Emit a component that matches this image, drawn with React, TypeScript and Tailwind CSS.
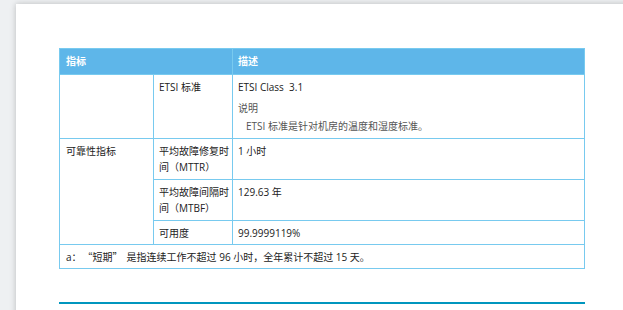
import React from "react";

const cell = "border border-[#78caef] px-[5px] pt-[4px] pb-[4px] align-top leading-[16px]";
const cellS = "border border-[#78caef] px-[5px] pt-[4px] pb-[3px] align-top leading-[16px]";
const cjk = { fontFamily: '"Noto Sans CJK SC", sans-serif' };

export default function App() {
  return (
    <div className="w-[623px] h-[310px] bg-[#eef0f2] overflow-hidden" style={{ fontFamily: '"Open Sans", "Noto Sans CJK SC", sans-serif' }}>
      <div className="ml-[16px] mt-[4px] h-[320px] bg-white shadow-[0_0_6px_rgba(0,0,0,0.22)] pl-[43px] pt-[44px] w-[640px]">
        <table lang="zh-CN" className="w-[526px] border-collapse text-[10px] text-[#222]">
          <colgroup>
            <col className="w-[94px]" />
            <col className="w-[79px]" />
            <col />
          </colgroup>
          <thead>
            <tr className="bg-[#5eb6e9] h-[26px]">
              <th colSpan={2} className="border border-[#78caef] px-[6px] text-left font-bold text-white text-[10px]">指标</th>
              <th className="border border-[#78caef] px-[5px] text-left font-bold text-white text-[10px]">描述</th>
            </tr>
          </thead>
          <tbody>
            <tr>
              <td className={cell}></td>
              <td className={cell + " pr-0"}>ETSI 标准</td>
              <td className={cell + " pb-[3px]"}>
                <div>ETSI Class&nbsp; 3.1</div>
                <div className="mt-[5px] text-[#555]">说明</div>
                <div className="mt-[2px] pl-[8px] text-[#555]">ETSI 标准是针对机房的温度和湿度标准。</div>
              </td>
            </tr>
            <tr>
              <td rowSpan={3} className={cell + " pl-[6px]"}>可靠性指标</td>
              <td className={cell + " pr-0"}>平均故障修复时间（MTTR）</td>
              <td className={cell}>1 小时</td>
            </tr>
            <tr>
              <td className={cell + " pr-0"}>平均故障间隔时间（MTBF）</td>
              <td className={cell}>129.63 年</td>
            </tr>
            <tr>
              <td className={cellS + " pr-0"}>可用度</td>
              <td className={cellS}>99.9999119%</td>
            </tr>
            <tr>
              <td colSpan={3} className={cellS + " pl-[6px]"}>
                a<span style={cjk}>：</span><span style={cjk} className="ml-[6px]">“</span>短期<span style={cjk} className="mr-[4px]">”</span>是指连续工作不超过 96 小时，全年累计不超过 15 天。
              </td>
            </tr>
          </tbody>
        </table>
        <div className="mt-[33px] w-[526px] h-[2px] bg-[#0096be]" />
      </div>
    </div>
  );
}
